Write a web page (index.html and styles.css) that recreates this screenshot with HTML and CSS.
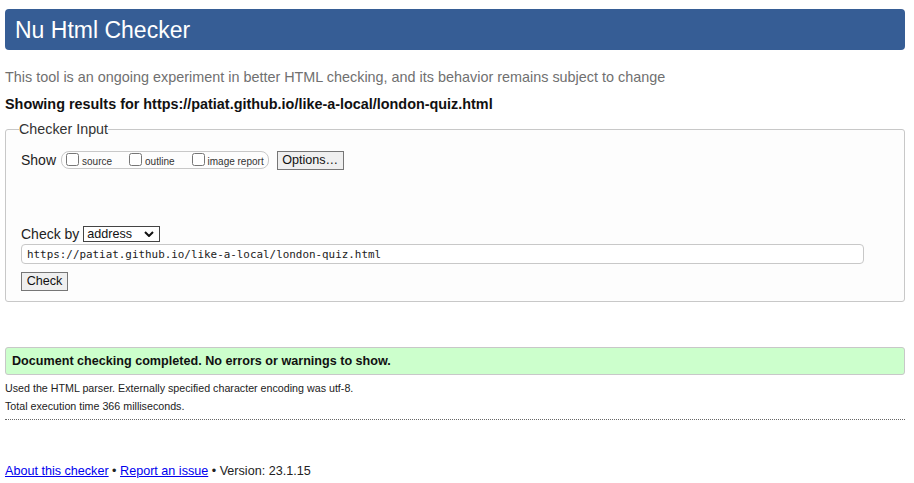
FILE: index.html
```html
<!DOCTYPE html>
<html lang="en">
<head>
<meta charset="utf-8">
<title>Nu Html Checker</title>
<link rel="stylesheet" href="styles.css">
</head>
<body>
<header class="banner"><h1 class="banner-title">Nu Html Checker</h1></header>
<p class="tagline">This tool is an ongoing experiment in better HTML checking, and its behavior remains subject to change</p>
<p class="results-for">Showing results for https://patiat.github.io/like-a-local/london-quiz.html</p>
<form class="checker">
  <fieldset class="checker-input">
    <legend class="checker-legend">Checker Input</legend>
    <div class="show-row">
      <span class="row-label">Show</span>
      <fieldset class="show-options">
        <label class="opt"><input type="checkbox" class="cb"><span class="opt-text">source</span></label>
        <label class="opt"><input type="checkbox" class="cb"><span class="opt-text">outline</span></label>
        <label class="opt"><input type="checkbox" class="cb"><span class="opt-text">image report</span></label>
      </fieldset>
      <button type="button" class="btn btn-options">Options…</button>
    </div>
    <div class="checkby-row">
      <span class="row-label">Check by</span>
      <span class="select-wrap">
        <select class="checkby-select"><option>address</option></select>
        <svg class="select-chevron" width="10" height="6" viewBox="0 0 10 6" aria-hidden="true"><path d="M1 1 L5 5 L9 1" fill="none" stroke="#111" stroke-width="2"/></svg>
      </span>
    </div>
    <input class="url-input" type="text" value="https://patiat.github.io/like-a-local/london-quiz.html">
    <button type="button" class="btn btn-check">Check</button>
  </fieldset>
</form>
<p class="success">Document checking completed. No errors or warnings to show.</p>
<p class="details">Used the HTML parser. Externally specified character encoding was utf-8.</p>
<p class="details">Total execution time 366 milliseconds.</p>
<hr class="divider">
<footer class="footer"><a href="#">About this checker</a> • <a href="#">Report an issue</a> • Version: 23.1.15</footer>
</body>
</html>
```
FILE: styles.css
```css
html, body {
  margin: 0;
  padding: 0;
  background: #fff;
}
body {
  padding: 9px 9px 0 5px;
  font-family: "Liberation Sans", Arial, sans-serif;
  font-size: 14px;
  color: #222;
}
.banner {
  background: #365d95;
  border-radius: 4px;
  height: 41px;
  display: flex;
  align-items: center;
  padding: 0 10px;
}
.banner-title {
  margin: 0;
  font-size: 23px;
  font-weight: normal;
  color: #fff;
  line-height: 1;
  padding-top: 1px;
}
.tagline {
  margin: 18px 0 0;
  line-height: 18px;
  color: #707070;
  font-size: 14.4px;
}
.results-for {
  margin: 9px 0 0;
  line-height: 18px;
  font-size: 14.4px;
  font-weight: bold;
  color: #111;
}
.checker {
  margin: 8px 0 0;
}
.checker-input {
  margin: 0;
  border: 1px solid #c8c8c8;
  border-radius: 3px;
  padding: 13px 15px 10px;
  display: flex;
  flex-direction: column;
  align-items: flex-start;
  background: #fdfdfd;
}
.checker-legend {
  padding: 0;
  margin-left: -2px;
  font-size: 14.3px;
  line-height: 16px;
  color: #333;
}
.show-row {
  display: flex;
  align-items: center;
  height: 20px;
}
.row-label {
  font-size: 14px;
  color: #222;
}
.show-options {
  margin: 0 0 0 5px;
  padding: 0 4px 0 4px;
  border: 1px solid #c8c8c8;
  border-radius: 8px;
  display: flex;
  align-items: center;
  height: 16px;
  box-sizing: content-box;
  min-inline-size: 0;
}
.opt {
  display: flex;
  align-items: center;
  font-size: 10px;
  color: #333;
  margin-right: 17px;
}
.opt:last-child {
  margin-right: 0;
}
.opt-text {
  padding-top: 3px;
}
.cb {
  margin: 0 3px 1px 0;
  width: 13px;
  height: 13px;
}
.btn {
  font-family: "Liberation Sans", Arial, sans-serif;
  font-size: 12.6px;
  color: #111;
  background: #efefef;
  border: 1px solid #767676;
  border-radius: 0;
  padding: 0;
  height: 19px;
  line-height: 17px;
}
.btn-options {
  margin-left: 8px;
  width: 67px;
}
.checkby-row {
  margin-top: 55px;
  display: flex;
  align-items: center;
  height: 18px;
}
.select-wrap {
  position: relative;
  margin-left: 4px;
  display: flex;
}
.checkby-select {
  appearance: none;
  -webkit-appearance: none;
  font-family: "Liberation Sans", Arial, sans-serif;
  font-size: 12.6px;
  width: 77px;
  height: 16px;
  padding: 0 0 0 3px;
  border: 1px solid #444;
  border-radius: 0;
  background: #fff;
  color: #111;
  line-height: 14px;
}
.select-chevron {
  position: absolute;
  right: 6px;
  top: 5px;
  pointer-events: none;
}
.url-input {
  margin-top: 1px;
  box-sizing: border-box;
  width: 843px;
  height: 20px;
  border: 1px solid #c8c8c8;
  border-radius: 4px;
  padding: 0 5px;
  font-family: "DejaVu Sans Mono", "Liberation Mono", monospace;
  font-size: 10.9px;
  color: #222;
  background: #fff;
}
.btn-check {
  margin-top: 8px;
  width: 47px;
}
.success {
  margin: 45px 0 0;
  height: 26px;
  line-height: 26px;
  background: #ccffcc;
  border: 1px solid #c8c8c8;
  border-radius: 3px;
  padding: 0 6px;
  font-weight: bold;
  font-size: 12.6px;
  color: #111;
}
.details {
  margin: 6px 0 0;
  font-size: 10.7px;
  line-height: 14px;
  color: #222;
}
.details + .details {
  margin-top: 4px;
}
.divider {
  margin: 6px 0 0;
  border: 0;
  border-top: 1px dotted #666;
  height: 0;
}
.footer {
  margin-top: 42px;
  font-size: 12.6px;
  line-height: 18px;
  color: #222;
}
.footer a {
  color: #0000ee;
}
```
